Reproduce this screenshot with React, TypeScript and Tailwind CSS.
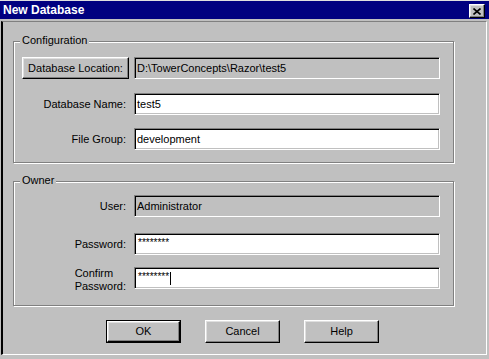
import React from 'react';

const sunken =
  'h-[22px] flex items-center pl-[2px] border border-t-[#808080] border-l-[#808080] border-r-white border-b-white shadow-[inset_1px_1px_0_#000,inset_-1px_-1px_0_#c0c0c0]';

const raised =
  'flex items-center justify-center border border-t-white border-l-white border-r-black border-b-black bg-[#c0c0c0] shadow-[inset_-1px_-1px_0_#808080,inset_1px_1px_0_#dfdfdf]';

function Group({ title, className, children }: { title: string; className: string; children: React.ReactNode }) {
  return (
    <div
      className={`relative ml-[10px] w-[441px] border border-[#808080] shadow-[inset_1px_1px_0_#fff,1px_1px_0_#fff] ${className}`}
    >
      <span className="absolute left-[6px] top-[-8px] bg-[#c0c0c0] px-[2px] leading-[13px]">{title}</span>
      {children}
    </div>
  );
}

function Row({ label, children, className = '' }: { label: React.ReactNode; children: React.ReactNode; className?: string }) {
  return (
    <div className={`grid grid-cols-[106px_306px] gap-x-[6px] ${className}`}>
      <div className="flex items-center justify-end pr-[2px]">{label}</div>
      {children}
    </div>
  );
}

function DialogButton({ label, isDefault = false }: { label: string; isDefault?: boolean }) {
  if (isDefault) {
    return (
      <div className="h-[23px] w-[75px] border border-black">
        <div className={`${raised} h-full w-full`}>{label}</div>
      </div>
    );
  }
  return <div className={`${raised} h-[23px] w-[75px]`}>{label}</div>;
}

export default function App() {
  return (
    <div className="h-[359px] w-[489px] overflow-hidden bg-[#c0c0c0] font-['Liberation_Sans',Arial,sans-serif] text-[11px] text-black">
      <div className="flex h-[19px] items-center justify-between border-t border-[#dfdfdf] bg-[#000080] pl-[3px] pr-[4px]">
        <span className="text-[12px] font-bold text-white">New Database</span>
        <div className={`${raised} mt-[2px] h-[14px] w-[16px]`}>
          <svg width="8" height="7" viewBox="0 0 8 7">
            <path d="M0.5 0.5 L7.5 6.5 M7.5 0.5 L0.5 6.5" stroke="#000" strokeWidth="1.6" fill="none" />
          </svg>
        </div>
      </div>

      <div className="ml-[1px] mt-[2px] h-[334px] w-[486px] border-t border-l-2 border-r border-b border-t-[#808080] border-l-black border-r-white border-b-white">
        <Group title="Configuration" className="mt-[19px] h-[122px] pl-[8px] pt-[15px]">
          <div className="grid grid-cols-[106px_306px] gap-x-[6px]">
            <div className={`${raised} h-[22px] w-[107px]`}>Database Location:</div>
            <div className={`${sunken} bg-[#c0c0c0]`}>D:\TowerConcepts\Razor\test5</div>
          </div>
          <Row label="Database Name:" className="mt-[14px]">
            <div className={`${sunken} bg-white`}>test5</div>
          </Row>
          <Row label="File Group:" className="mt-[13px]">
            <div className={`${sunken} bg-white`}>development</div>
          </Row>
        </Group>

        <Group title="Owner" className="mt-[18px] h-[125px] pl-[8px] pt-[13px]">
          <Row label="User:">
            <div className={`${sunken} bg-[#c0c0c0]`}>Administrator</div>
          </Row>
          <Row label="Password:" className="mt-[16px]">
            <div className={`${sunken} bg-white`}>
              <span className="mb-[3px] pl-[1px] text-[10px]">********</span>
            </div>
          </Row>
          <Row
            label={
              <div className="text-left leading-[13px]">
                Confirm
                <br />
                Password:
              </div>
            }
            className="mt-[12px]"
          >
            <div className={`${sunken} bg-white`}>
              <span className="mb-[3px] pl-[1px] text-[10px]">********</span>
              <span className="ml-[1px] h-[13px] w-px bg-black" />
            </div>
          </Row>
        </Group>

        <div className="ml-[103px] mt-[14px] flex gap-[24px]">
          <DialogButton label="OK" isDefault />
          <DialogButton label="Cancel" />
          <DialogButton label="Help" />
        </div>
      </div>
    </div>
  );
}
